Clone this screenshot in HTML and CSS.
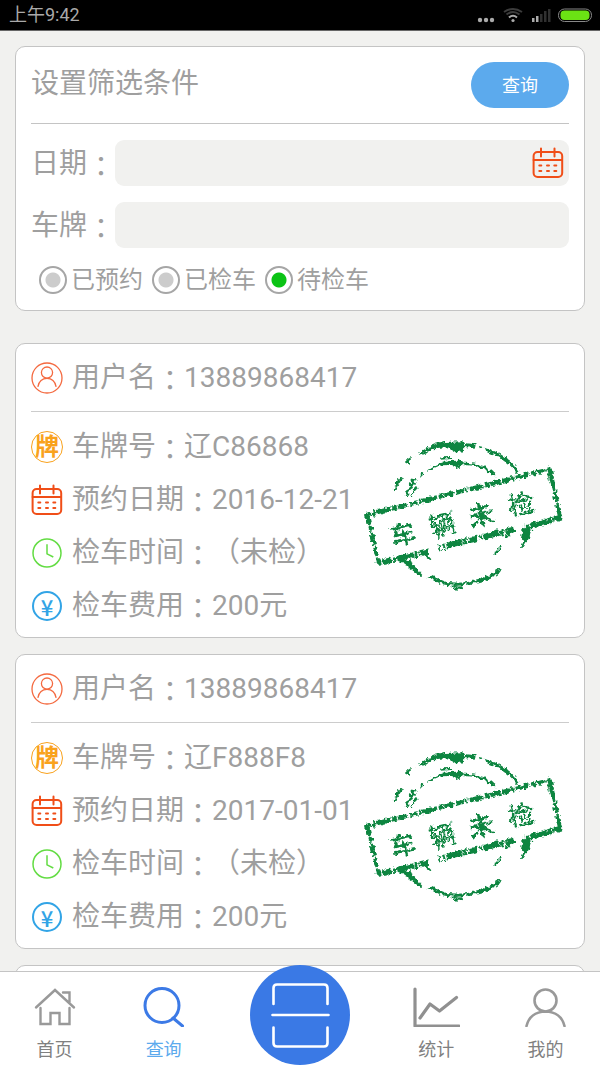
FILE: index.html
```html
<!DOCTYPE html>
<html lang="zh-CN">
<head>
    <meta charset="UTF-8">
    <meta name="viewport" content="width=device-width, initial-scale=1.0">
    <title>查询</title>
    <link rel="stylesheet" href="styles.css">
</head>
<body>
    <!-- 公用图标 -->
    <svg class="sprite" aria-hidden="true">
        <filter id="rough" x="-5%" y="-5%" width="110%" height="110%">
            <feTurbulence type="fractalNoise" baseFrequency="0.09" numOctaves="2" seed="4"/>
            <feDisplacementMap in="SourceGraphic" scale="18" xChannelSelector="R" yChannelSelector="G"/>
        </filter>
        <symbol id="icon-calendar" viewBox="0 0 32 32">
            <g fill="none" stroke="#f04e18" stroke-width="2" stroke-linecap="round">
                <rect x="1.6" y="5" width="28.6" height="25" rx="4"/>
                <path d="M1.6 13H30M9 1.5v8M22.5 1.5v8"/>
                <path d="M7.3 18.5h2M15 18.5h2M22.3 18.5h2M7.3 24h2M15 24h2M22.3 24h2"/>
            </g>
        </symbol>
        <symbol id="icon-user" viewBox="0 0 32 32">
            <g fill="none" stroke="#f4693f" stroke-width="1.3" stroke-linecap="round">
                <circle cx="16" cy="16" r="15"/>
                <circle cx="16" cy="10.6" r="5.6"/>
                <path d="M7 24.4C8 19.3 11.5 16.3 16 16.3s8 3 9 8.1"/>
            </g>
        </symbol>
        <symbol id="icon-clock" viewBox="0 0 32 32">
            <g fill="none" stroke="#63dc43" stroke-width="1.5">
                <circle cx="16" cy="16" r="14"/>
                <path d="M16 7.3v9.5l6.3 3.2"/>
            </g>
        </symbol>
        <symbol id="icon-stamp" viewBox="39 30 600 456">
            <g fill="#0c8540" filter="url(#rough)">
                <path d="M203 76Q232 42 286 36L335 34 346 50 336 64 318 67 294 52 262 54 240 62Z"/>
                <path d="M345 40l32 3-3 10-28-1zM386 48l11 2-5 9zM402 53Q475 72 506 124l-5 6-14-17Q460 84 405 62Z"/>
                <path d="M169 90l14-9-4 24-10-5zM155 137l4 6-20 31-5 13-3-8q5-25 24-42zM214 126l7 7-11 11zM186 146l14 2-30 51-6-3zM197 171l5 3-18 29-3-5z"/>
                <path d="M232 121Q258 98 300 93l30-1 8 9-14 14-18-10-32 1Q250 112 234 126zM268 82l35-1v6l-33 2zM340 98Q400 96 440 134l-4 5-35-19Q375 103 340 106Z"/>
                <path d="M145 390l35 0 13 18 26 29-9 0-35-25zM232 441l12-4 45 19 40 2Q390 455 449 416l4 11Q412 460 318 468L270 462ZM302 470l37-1v4l-16 9z"/>
                <path d="M215 372l12-2 17 18-4 4zM433 374l2-11 18-18 2 6-14 23zM462 326l15-22 13-8-2 8-20 24zM519 292l28-2-10 32-22 36-2-8 9-18-9-10z"/>
                <g fill="none" stroke="#0c8540">
                    <path d="M42 257L598 118" stroke-width="13" stroke-dasharray="22 4 9 3 45 5 14 3 31 7"/>
                    <path d="M598 113l33 150" stroke-width="13" stroke-dasharray="72 3 30 4"/>
                    <path d="M636 262L525 291M494 298L264 353M236 364L83 400" stroke-width="17" stroke-dasharray="28 5 12 2 50 4 7 6"/>
                    <path d="M52 257l36 147" stroke-width="11" stroke-dasharray="28 5 14 3 40 6"/>
                </g>
            </g>
        </symbol>
    </svg>

    <header class="status-bar">
        <span>上午9:42</span>
        <svg class="status-icons" viewBox="0 0 116 16" aria-hidden="true">
            <g fill="#aaa">
                <circle cx="3" cy="13" r="2.2"/><circle cx="9" cy="13" r="2.2"/><circle cx="15" cy="13" r="2.2"/>
                <circle cx="36" cy="13.5" r="1.6"/>
                <rect x="55" y="11" width="2.5" height="4"/><rect x="59" y="9" width="2.5" height="6"/>
            </g>
            <g fill="none" stroke-width="2">
                <path d="M32 10.5q4-3.5 8 0" stroke="#aaa"/>
                <path d="M29.5 7.5q6.5-5 13 0M27 5q9-6 18 0" stroke="#3c3c3c"/>
            </g>
            <path fill="#303030" d="M63 7h2.5v8H63zM67 4h2.5v11H67zM71 2h2.5v13H71z"/>
            <rect x="81.5" y="2" width="33" height="12.5" rx="6" fill="none" stroke="#888"/>
            <rect x="83.5" y="3.5" width="29" height="9.5" rx="4" fill="#6be314"/>
        </svg>
    </header>

    <main class="content">
        <form class="card filter">
            <div class="filter-head">
                <h1>设置筛选条件</h1>
                <button class="search-btn" type="button">查询</button>
            </div>
            <div class="field">
                <label for="date">日期<i>：</i></label>
                <div class="field-box">
                    <input id="date" type="text">
                    <svg class="field-icon"><use href="#icon-calendar"/></svg>
                </div>
            </div>
            <div class="field">
                <label for="plate">车牌<i>：</i></label>
                <div class="field-box">
                    <input id="plate" type="text">
                </div>
            </div>
            <div class="options">
                <label><input type="radio" name="state">已预约</label>
                <label><input type="radio" name="state">已检车</label>
                <label><input type="radio" name="state" checked>待检车</label>
            </div>
        </form>

        <section class="list">
            <article class="card record">
                <div class="row record-head">
                    <svg class="icon"><use href="#icon-user"/></svg>
                    <span>用户名<i>：</i>13889868417</span>
                </div>
                <div class="record-body">
                    <div class="rows">
                        <div class="row"><b class="icon badge plate">牌</b><span>车牌号<i>：</i>辽C86868</span></div>
                        <div class="row"><svg class="icon"><use href="#icon-calendar"/></svg><span>预约日期<i>：</i>2016-12-21</span></div>
                        <div class="row"><svg class="icon"><use href="#icon-clock"/></svg><span>检车时间<i>：</i>（未检）</span></div>
                        <div class="row"><b class="icon badge fee">¥</b><span>检车费用<i>：</i>200元</span></div>
                    </div>
                    <svg class="stamp" viewBox="39 30 600 456">
                        <use href="#icon-stamp" x="39" y="30" width="600" height="456"/>
                        <g class="stamp-text" text-anchor="middle" filter="url(#rough)">
                            <text transform="translate(166 341) rotate(-14)">车</text>
                            <text transform="translate(284 312) rotate(-14)">辆</text>
                            <text transform="translate(400 282) rotate(-14)">未</text>
                            <text transform="translate(519 251) rotate(-14)">检</text>
                        </g>
                    </svg>
                </div>
            </article>

            <article class="card record">
                <div class="row record-head">
                    <svg class="icon"><use href="#icon-user"/></svg>
                    <span>用户名<i>：</i>13889868417</span>
                </div>
                <div class="record-body">
                    <div class="rows">
                        <div class="row"><b class="icon badge plate">牌</b><span>车牌号<i>：</i>辽F888F8</span></div>
                        <div class="row"><svg class="icon"><use href="#icon-calendar"/></svg><span>预约日期<i>：</i>2017-01-01</span></div>
                        <div class="row"><svg class="icon"><use href="#icon-clock"/></svg><span>检车时间<i>：</i>（未检）</span></div>
                        <div class="row"><b class="icon badge fee">¥</b><span>检车费用<i>：</i>200元</span></div>
                    </div>
                    <svg class="stamp" viewBox="39 30 600 456">
                        <use href="#icon-stamp" x="39" y="30" width="600" height="456"/>
                        <g class="stamp-text" text-anchor="middle" filter="url(#rough)">
                            <text transform="translate(166 341) rotate(-14)">车</text>
                            <text transform="translate(284 312) rotate(-14)">辆</text>
                            <text transform="translate(400 282) rotate(-14)">未</text>
                            <text transform="translate(519 251) rotate(-14)">检</text>
                        </g>
                    </svg>
                </div>
            </article>

            <article class="card record next"></article>
        </section>
    </main>

    <nav class="tabs">
        <a href="#home">
            <svg viewBox="0 0 48 40" fill="none" stroke="#999" stroke-width="2.4" stroke-linecap="round">
                <path d="M5 20.5L24 3l19 17.5M9.5 21v16h10V26h9v11h10V21M32 5.5h6.5v9.5"/>
            </svg>
            <span>首页</span>
        </a>
        <a href="#search" class="active">
            <svg viewBox="0 0 48 40" fill="none" stroke="#3c7ae6" stroke-width="3" stroke-linecap="round">
                <circle cx="22" cy="18.5" r="17"/>
                <path d="M33 31l9.5 8"/>
            </svg>
            <span>查询</span>
        </a>
        <a href="#scan" class="scan" aria-label="扫一扫">
            <svg viewBox="0 0 100 100" fill="none" stroke="#fff" stroke-width="2.6" stroke-linecap="round">
                <path d="M23.5 39V23q0-3.5 3.5-3.5h47q3.5 0 3.5 3.5v16M22.5 50h56M23.5 62.5v15.5q0 3.5 3.5 3.5h47q3.5 0 3.5-3.5V62.5"/>
            </svg>
        </a>
        <a href="#stats">
            <svg viewBox="0 0 48 40" fill="none" stroke="#909090" stroke-width="3.2" stroke-linecap="round" stroke-linejoin="round">
                <path d="M3 2v37h44M8 31L18 17l9.500 7L44.500 10.500"/>
            </svg>
            <span>统计</span>
        </a>
        <a href="#mine">
            <svg viewBox="0 0 48 40" fill="none" stroke="#999" stroke-width="2.6" stroke-linecap="round">
                <circle cx="24.5" cy="13.5" r="11"/>
                <path d="M5.5 39Q9 25 24.5 24.5 40 25 43.5 39"/>
            </svg>
            <span>我的</span>
        </a>
    </nav>
</body>
</html>
```
FILE: styles.css
```css
:root {
    --text: #9f9f9f;
    --line: #c4c4c4;
    --panel: #f1f1ef;
    --blue: #5caaed;
}

* {
    box-sizing: border-box;
}

body {
    margin: 0;
    height: 100vh;
    display: flex;
    flex-direction: column;
    overflow: hidden;
    background: var(--panel);
    color: var(--text);
    font-family: Roboto, "Noto Sans CJK SC", sans-serif;
    font-size: 28px;
    line-height: 1;
    text-spacing-trim: space-all;
}

/* 冒号居中显示 */
i {
    font-family: "Noto Sans CJK TC", sans-serif;
    font-style: normal;
    font-feature-settings: "locl" 0;
    line-height: 0;
    vertical-align: -4px;
}

.sprite {
    position: absolute;
    width: 0;
    height: 0;
}

.status-bar {
    flex: none;
    display: flex;
    align-items: center;
    justify-content: space-between;
    height: 31px;
    padding: 0 7px 0 9px;
    border-bottom: 1px solid #666;
    background: #000;
    color: #aaa;
    font-size: 18px;
}

.status-icons {
    width: 116px;
    height: 16px;
}

.content {
    flex: 1;
    min-height: 0;
    padding: 15px 15px 0;
    overflow-y: auto;
    scrollbar-width: none;
}

.card {
    padding: 0 15px;
    border: 1px solid var(--line);
    border-radius: 10px;
    background: #fff;
}

.filter {
    padding-bottom: 16px;
}

.filter-head {
    display: flex;
    align-items: center;
    justify-content: space-between;
    height: 77px;
    margin-bottom: 16px;
    border-bottom: 1px solid var(--line);
}

.filter-head h1 {
    margin: 0 0 2px;
    font-size: 28px;
    font-weight: normal;
}

.search-btn {
    width: 98px;
    height: 46px;
    padding: 2px 0 0;
    border: none;
    border-radius: 23px;
    background: var(--blue);
    color: #fff;
    font: inherit;
    font-size: 18px;
}

.field {
    display: flex;
    align-items: center;
    margin-bottom: 16px;
}

.field label {
    flex: none;
    width: 84px;
    padding-top: 2px;
    white-space: nowrap;
}

.field-box {
    flex: 1;
    display: flex;
    align-items: center;
    height: 46px;
    padding-right: 5px;
    border-radius: 9px;
    background: var(--panel);
}

.field-box input {
    flex: 1;
    min-width: 0;
    height: 100%;
    padding: 0 10px;
    border: none;
    outline: none;
    background: none;
    color: inherit;
    font: inherit;
}

.field-icon {
    width: 32px;
    height: 32px;
}

.options {
    display: flex;
    gap: 9px;
    padding: 2px 0 0 8px;
    font-size: 24px;
}

.options label {
    display: flex;
    align-items: center;
    gap: 4px;
}

.options input {
    appearance: none;
    width: 28px;
    height: 28px;
    margin: 0;
    border: 2px solid #a6a6a6;
    border-radius: 50%;
    background: radial-gradient(circle, #ccc 7px, #fff 8px);
}

.options input:checked {
    background: radial-gradient(circle, #0bc315 7px, #fff 8px);
}

.list {
    display: flex;
    flex-direction: column;
    gap: 16px;
    margin-top: 32px;
}

.row {
    display: flex;
    align-items: center;
    gap: 9px;
    height: 53px;
    white-space: nowrap;
}

.icon {
    flex: none;
    width: 32px;
    height: 32px;
}

.badge {
    display: flex;
    align-items: center;
    justify-content: center;
    border-radius: 50%;
}

.plate {
    border: 1px solid #f9a21d;
    color: #f9a21d;
    font-size: 24px;
}

.fee {
    width: 30px;
    height: 30px;
    margin: 0 1px;
    border: 2px solid #32a4e6;
    color: #32a4e6;
    font-family: "Noto Sans CJK SC", sans-serif;
    font-size: 22px;
    font-weight: 500;
}

.record-head {
    height: 68px;
    border-bottom: 1px solid #ccc;
}

.record-body {
    display: flex;
    align-items: center;
    padding: 8px 0 5px;
}

.rows {
    width: 332px;
}

.stamp {
    width: 200px;
    height: 152px;
    margin-bottom: 20px;
}

.stamp-text {
    fill: #0c8540;
    font-family: "Noto Sans CJK SC", sans-serif;
    font-size: 78px;
    font-weight: 500;
}

.next {
    min-height: 295px;
}

.tabs {
    position: relative;
    flex: none;
    display: grid;
    grid-template-columns: 2fr 2fr 3fr 2fr 2fr;
    height: 96px;
    border-top: 1px solid var(--line);
    background: #fff;
}

.tabs a {
    display: flex;
    flex-direction: column;
    align-items: center;
    gap: 14px;
    padding-top: 15px;
    color: #808080;
    font-size: 18px;
    text-decoration: none;
}

.tabs a svg {
    width: 48px;
    height: 40px;
}

.tabs a.active {
    color: var(--blue);
}

/* 扫码按钮凸出导航栏 */
.tabs .scan {
    position: absolute;
    top: -7px;
    left: 50%;
    width: 100px;
    height: 100px;
    margin-left: -50px;
    padding: 0;
    border-radius: 50%;
    background: #3a79e5;
}

.tabs .scan svg {
    width: 100px;
    height: 100px;
}

.tabs .scan + a {
    grid-column: 4;
}
```
